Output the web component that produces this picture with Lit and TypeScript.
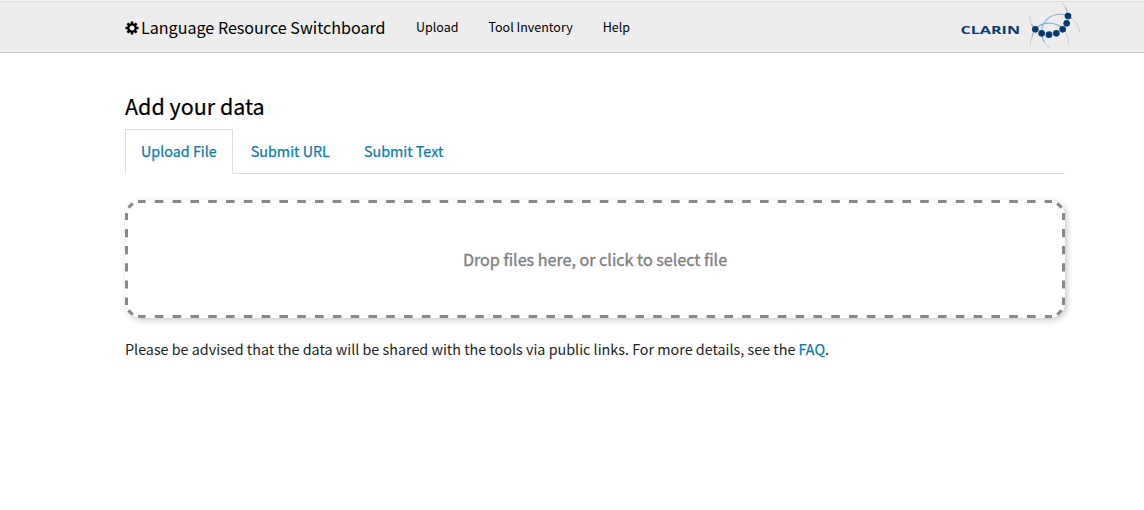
import { LitElement, html, css, svg } from "lit";
import { customElement } from "lit/decorators.js";

const DOTS = [
  [256, 88], [275, 100], [297, 104], [319, 100], [338, 88], [350, 70], [354, 48],
];

@customElement("clarin-logo")
class ClarinLogo extends LitElement {
  static styles = css`
    :host { display: block; }
    svg { display: block; }
    .word { font: 700 10.4px "Open Sans", sans-serif; fill: #0b3c6e; }
    .arc { fill: none; stroke: #7fafd8; stroke-width: 3.2; }
    .tip { fill: none; stroke: #b9d0e6; stroke-width: 3; }
    .dot { fill: #043a6b; }
  `;
  render() {
    return html`<svg width="124" height="50" viewBox="0 0 124 50">
      <text class="word" x="4.5" y="31.6" textLength="59.5" lengthAdjust="spacingAndGlyphs">CLARIN</text>
      <g transform="translate(-6 -2) scale(.33333)">
        <path class="arc" d="M245 112Q249 95 262 81Q280 67 306 70Q334 75 347 96" />
        <path class="tip" d="M241 135Q241 122 245 112M347 96Q358 113 355 135" />
        <path class="arc" d="M244 72Q249 82 256 88M275 100Q273 76 290 59Q307 42 335 43Q352 44 366 56M276 100Q276 117 284 128M354 48Q352 32 346 21" />
        <path class="tip" d="M239 46Q239 60 244 72M284 128Q290 138 299 143M366 56Q386 72 389 98M346 21Q342 13 336 9" />
        ${DOTS.map(([x, y]) => svg`<circle class="dot" cx=${x} cy=${y} r="10" />`)}
      </g>
    </svg>`;
  }
}

@customElement("app-root")
class AppRoot extends LitElement {
  static styles = css`
    :host {
      display: block;
      height: 510px;
      background: #fff;
      color: #222;
      font-family: "Noto Sans CJK SC", "Noto Sans", sans-serif;
      font-size: 14.33px;
      overflow: hidden;
    }
    * { box-sizing: border-box; }
    a { color: #0d7ba8; text-decoration: none; }
    .bar {
      display: flex;
      height: 53px;
      padding: 0 64px 0 125px;
      background: #ededed;
      border-top: 1px solid #f4f4f4;
      border-bottom: 1px solid #ccc;
      box-shadow: inset 0 1px #ddd;
      line-height: 52px;
      white-space: nowrap;
    }
    .brand { display: flex; align-items: center; width: 291px; color: #000; font-size: 16.1px; }
    .gear { flex: none; width: 14px; height: 14px; margin: 2px 2px 0 0; }
    .nav { display: flex; gap: 30px; font-size: 12.5px; }
    .nav a { color: #000; }
    .logo { margin: 1px 0 0 auto; }
    .page { padding: 35px 79px 0 125px; }
    .title { margin: 0; font-size: 21.5px; font-weight: 400; line-height: 36px; color: #000; -webkit-text-stroke: 0.2px; }
    .tabs { display: flex; height: 45px; margin-top: 5px; border-bottom: 1px solid #ddd; gap: 2px; }
    .tab { height: 45px; padding: 0 15px; border: 1px solid transparent; line-height: 42px; -webkit-text-stroke: 0.25px; }
    .tab.on { border-color: #ddd; border-bottom-color: #fff; background: #fff; }
    .drop {
      position: relative;
      display: grid;
      place-items: center;
      height: 118px;
      margin-top: 26px;
      border-radius: 15px;
      box-shadow: 2px 2px 6px rgba(0, 0, 0, 0.22);
      color: #808080;
      font-size: 16.12px;
      line-height: 24px;
    }
    .dashes { position: absolute; inset: 0; fill: none; stroke: #888; stroke-width: 3; }
    .hint { padding-bottom: 1px; -webkit-text-stroke: 0.35px; }
    .note { margin: 19px 0 0; line-height: 24px; white-space: nowrap; }
    .note a { -webkit-text-stroke: 0.25px; }
  `;
  render() {
    const corner = "M3.4 7.6L7.8 3.4";
    return html`
      <header class="bar">
        <div class="brand">
          <svg class="gear" viewBox="0 0 14 14">
            <path fill="none" stroke="#000" stroke-width="2.3" d="M7 3.3a3.7 3.7 0 1 0 0 7.4a3.7 3.7 0 1 0 0-7.4z" />
            <path stroke="#000" stroke-width="2.5" d="M7 .5V3M7 11v2.5M.5 7H3M11 7h2.5M2.4 2.4l1.8 1.8M9.8 9.8l1.8 1.8M2.4 11.6l1.8-1.8M9.8 4.2l1.8-1.8" />
          </svg>
          <span class="name">Language Resource Switchboard</span>
        </div>
        <nav class="nav"><a>Upload</a><a>Tool Inventory</a><a>Help</a></nav>
        <clarin-logo class="logo"></clarin-logo>
      </header>
      <main class="page">
        <h1 class="title">Add your data</h1>
        <div class="tabs">
          <a class="tab on">Upload File</a><a class="tab">Submit URL</a><a class="tab">Submit Text</a>
        </div>
        <div class="drop">
          <svg class="dashes" width="940" height="118" viewBox="0 0 940 118">
            <path stroke-dasharray="8.6 9.2" stroke-dashoffset="1" d="M13 1.5H927M13 116.5H927" />
            <path stroke-dasharray="8.2 8.95" stroke-dashoffset="1.2" d="M1.5 13V105M938.5 13V105" />
            <path d=${corner} />
            <path transform="matrix(-1 0 0 1 940 0)" d=${corner} />
            <path transform="matrix(1 0 0 -1 0 118)" d=${corner} />
            <path transform="matrix(-1 0 0 -1 940 118)" d=${corner} />
          </svg>
          <span class="hint">Drop files here, or click to select file</span>
        </div>
        <p class="note">Please be advised that the data will be shared with the tools via public links. For more details, see the <a>FAQ</a>.</p>
      </main>
    `;
  }
}
